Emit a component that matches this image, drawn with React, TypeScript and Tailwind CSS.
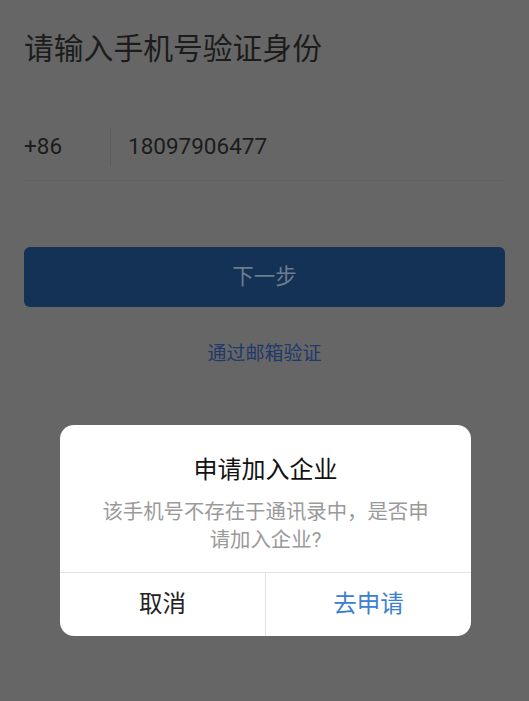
import React from 'react';

const font = { fontFamily: 'Roboto, "Noto Sans CJK SC", sans-serif' };

export default function App() {
  return (
    <div className="relative w-[529px] h-[701px] bg-[#666666] overflow-hidden" style={font}>
      <div className="px-6 pt-[31px]">
        <h1 className="text-[29.8px] leading-[36px] text-[#1c1c1c] font-normal">请输入手机号验证身份</h1>

        <div className="mt-[61px] flex items-center h-[38px]">
          <span className="w-[86px] text-[22.5px] text-[#1c1c1c]">+86</span>
          <div className="w-px h-[38px] bg-[#5c5c5c]"></div>
          <span className="ml-[17px] text-[22.5px] text-[#1c1c1c]">18097906477</span>
        </div>
        <div className="mt-[14px] h-px bg-[#626262]"></div>

        <button className="mt-[66px] w-full h-[60px] rounded-[6px] bg-[#133256] text-[21.5px] text-[#6f7c8c]">
          下一步
        </button>

        <div className="mt-[35px] text-center text-[19px] leading-[24px] text-[#20386a]">通过邮箱验证</div>
      </div>

      <div className="absolute left-[60px] top-[425px] w-[411px] h-[211px] rounded-[14px] bg-white flex flex-col overflow-hidden">
        <div className="flex-1 flex flex-col items-center px-[38px] pt-[29px]">
          <div className="text-[24px] leading-[32px] text-[#111111]">申请加入企业</div>
          <div className="mt-[12px] text-center text-[20.4px] leading-[28px] text-[#9a9a9a]">
            该手机号不存在于通讯录中，是否申请加入企业?
          </div>
        </div>
        <div className="h-[64px] flex border-t border-[#e3e3e3]">
          <button className="flex-1 text-[23.5px] text-[#222222]">取消</button>
          <div className="w-px bg-[#e3e3e3]"></div>
          <button className="flex-1 text-[23.5px] text-[#3a80d2]">去申请</button>
        </div>
      </div>
    </div>
  );
}
